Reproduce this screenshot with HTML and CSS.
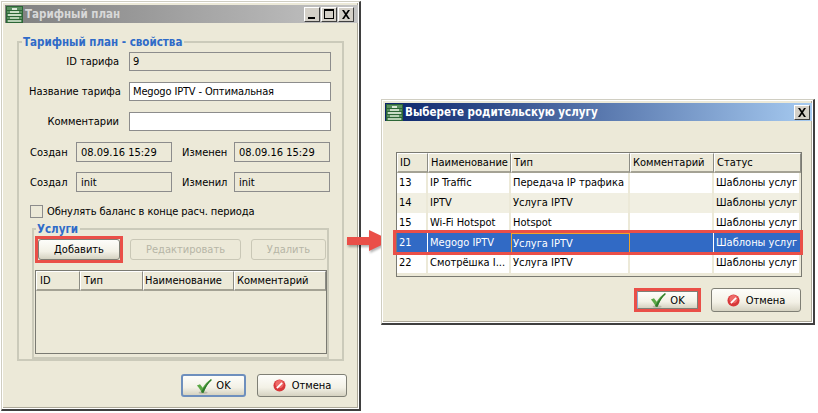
FILE: index.html
```html
<!DOCTYPE html>
<html lang="ru">
<head>
<meta charset="utf-8">
<title>Тарифный план</title>
<link rel="stylesheet" href="styles.css">
</head>
<body>
<svg class="sprites" width="0" height="0" aria-hidden="true">
  <symbol id="logo" viewBox="0 0 17 17">
    <rect width="17" height="17" fill="#2c6636"/>
    <rect x="1" y="1" width="15" height="15" fill="#5a9060"/>
    <rect x="1" y="4" width="15" height="1" fill="#2c6636"/>
    <rect x="1" y="7" width="15" height="1" fill="#2c6636"/>
    <rect x="1" y="10" width="15" height="1" fill="#2c6636"/>
    <rect x="1" y="13" width="15" height="1" fill="#2c6636"/>
    <rect x="6" y="2" width="5" height="2" fill="#dbe8d8"/>
    <rect x="4" y="5" width="9" height="2" fill="#c9dcc6"/>
    <rect x="2" y="8" width="13" height="2" fill="#c9dcc6"/>
    <rect x="4" y="11" width="9" height="2" fill="#b5cfb3"/>
    <rect x="2" y="14" width="13" height="2" fill="#b5cfb3"/>
  </symbol>
  <symbol id="check" viewBox="0 0 18 18">
    <ellipse cx="8" cy="16.5" rx="5" ry="1.2" fill="#b9b7a8"/>
    <path d="M1 8.5 L4.5 7 L7.5 11 C9.5 7.5 13 3.5 17 1 L17.5 2.5 C13.5 6 10.5 11 8.5 16.5 L6.5 16.5 C5 13.5 3 10.5 1 8.5 Z" fill="#5aa845"/>
    <path d="M8.5 16.5 L6.5 16.5 L6 15 C9 10 13 5 17 1 L17.5 2.5 C13.5 6 10.5 11 8.5 16.5 Z" fill="#2f7a2c"/>
  </symbol>
  <symbol id="cancel" viewBox="0 0 14 14">
    <circle cx="7" cy="7" r="6.5" fill="#d8383a"/>
    <circle cx="7" cy="5.5" r="4.5" fill="#ee6a68"/>
    <path d="M3.5 9.2 L9.2 3.5 L10.5 4.8 L4.8 10.5 Z" fill="#fff"/>
  </symbol>
  <symbol id="close" viewBox="0 0 10 9">
    <path d="M1 0 H3 L5 3 L7 0 H9 L6 4.5 L9 9 H7 L5 6 L3 9 H1 L4 4.5 Z" fill="#000"/>
  </symbol>
</svg>

<section class="window main-window">
  <header class="titlebar titlebar-inactive">
    <svg class="logo"><use href="#logo"/></svg>
    <span class="title-text">Тарифный план</span>
    <span class="wbtn"><i class="glyph-min"></i></span>
    <span class="wbtn wbtn-gap"><i class="glyph-max"></i></span>
    <span class="wbtn wbtn-gap"><svg class="glyph-close"><use href="#close"/></svg></span>
  </header>

  <fieldset class="group group-plan">
    <legend>Тарифный план - свойства</legend>

    <div class="row-wide row-id">
      <label class="lbl">ID тарифа</label>
      <div class="field">9</div>
    </div>
    <div class="row-wide">
      <label class="lbl">Название тарифа</label>
      <div class="field field-white">Megogo IPTV - Оптимальная</div>
    </div>
    <div class="row-wide">
      <label class="lbl">Комментарии</label>
      <div class="field field-white"></div>
    </div>

    <div class="row-pair row-created">
      <label class="lbl-first">Создан</label>
      <div class="field">08.09.16 15:29</div>
      <label class="lbl-second">Изменен</label>
      <div class="field">08.09.16 15:29</div>
    </div>
    <div class="row-pair">
      <label class="lbl-first">Создал</label>
      <div class="field">init</div>
      <label class="lbl-second">Изменил</label>
      <div class="field">init</div>
    </div>

    <div class="check-row">
      <span class="checkbox"></span>
      <label>Обнулять баланс в конце расч. периода</label>
    </div>

    <fieldset class="group group-services">
      <legend>Услуги</legend>
      <div class="service-actions">
        <span class="mark"><button class="btn btn-add">Добавить</button></span>
        <button class="btn btn-disabled btn-edit">Редактировать</button>
        <button class="btn btn-disabled btn-del">Удалить</button>
      </div>
      <div class="table-box table-services">
        <table>
          <thead>
            <tr>
              <th class="s-id">ID</th>
              <th class="s-type">Тип</th>
              <th class="s-name">Наименование</th>
              <th class="s-comm">Комментарий</th>
            </tr>
          </thead>
        </table>
      </div>
    </fieldset>
  </fieldset>

  <footer class="actions actions-main">
    <button class="btn btn-ok btn-default"><svg class="ico-check"><use href="#check"/></svg>OK</button>
    <button class="btn btn-cancel-main"><svg class="ico-cancel"><use href="#cancel"/></svg>Отмена</button>
  </footer>
</section>

<svg class="arrow" width="46" height="24" viewBox="0 0 46 24" aria-hidden="true">
  <path d="M1 8 H23 V1 L45 11.5 L23 22 V16 H1 Z" fill="#ea4f48"/>
</svg>

<section class="window child-window">
  <header class="titlebar titlebar-active">
    <svg class="logo"><use href="#logo"/></svg>
    <span class="title-text">Выберете родительскую услугу</span>
    <span class="wbtn"><svg class="glyph-close"><use href="#close"/></svg></span>
  </header>

  <div class="table-box table-parents">
    <table>
      <thead>
        <tr>
          <th class="p-id">ID</th>
          <th class="p-name">Наименование</th>
          <th class="p-type">Тип</th>
          <th class="p-comm">Комментарий</th>
          <th class="p-status">Статус</th>
        </tr>
      </thead>
      <tbody>
        <tr><td>13</td><td>IP Traffic</td><td>Передача IP трафика</td><td></td><td>Шаблоны услуг</td></tr>
        <tr class="alt"><td>14</td><td>IPTV</td><td>Услуга IPTV</td><td></td><td>Шаблоны услуг</td></tr>
        <tr><td>15</td><td>Wi-Fi Hotspot</td><td>Hotspot</td><td></td><td>Шаблоны услуг</td></tr>
        <tr class="selected"><td>21</td><td>Megogo IPTV</td><td class="focus">Услуга IPTV</td><td></td><td>Шаблоны услуг</td></tr>
        <tr><td>22</td><td>Смотрёшка I...</td><td>Услуга IPTV</td><td></td><td>Шаблоны услуг</td></tr>
      </tbody>
    </table>
    <div class="row-mark"></div>
  </div>

  <footer class="actions actions-child">
    <span class="mark"><button class="btn btn-ok-child"><svg class="ico-check"><use href="#check"/></svg>OK</button></span>
    <button class="btn btn-cancel-child"><svg class="ico-cancel"><use href="#cancel"/></svg>Отмена</button>
  </footer>
</section>
</body>
</html>
```

FILE: styles.css
```css
* { box-sizing: border-box; }
html, body { margin: 0; padding: 0; }
body {
  position: relative;
  width: 818px;
  height: 413px;
  overflow: hidden;
  background: #fff;
  font-family: "DejaVu Sans", sans-serif;
  font-stretch: condensed;
  font-size: 11px;
  line-height: 13px;
  color: #000;
}
.sprites { position: absolute; }

/* windows on the desktop */
.window {
  position: absolute;
  background: #ece9d8;
  border: 1px solid #d0cec2;
  border-width: 1px 2px 2px 1px;
  border-right-color: #3f3f3f;
  border-bottom-color: #3f3f3f;
  box-shadow: inset 0 0 0 1px #fff, inset -1px -1px 0 1px #aca899;
  padding: 3px 1px 0 3px;
}
.main-window { left: 1px; top: 1px; width: 360px; height: 410px; }
.child-window { left: 381px; top: 99px; width: 434px; height: 226px; }

.titlebar {
  display: flex;
  align-items: center;
  height: 18px;
  padding-left: 1px;
  padding-right: 2px;
  font-weight: bold;
  font-size: 11.5px;
}
.titlebar-inactive { background: linear-gradient(90deg, #7f7f7f, #c4c4c4); color: #d8d8d8; padding-right: 4px; }
.titlebar-active { background: linear-gradient(90deg, #0a246a, #a6caf0); color: #fff; }
.logo { width: 17px; height: 17px; flex: none; }
.title-text { margin-left: 2px; flex: 1; }

.wbtn {
  display: flex;
  align-items: center;
  justify-content: center;
  width: 16px;
  height: 15px;
  background: #d4d0c8;
  border: 1px solid;
  border-color: #fff #404040 #404040 #fff;
}
.wbtn-gap { margin-left: 1px; }
.glyph-min { width: 7px; height: 2px; background: #000; margin-top: 8px; margin-right: 2px; }
.glyph-max { width: 10px; height: 10px; border: 1px solid #000; border-top-width: 2px; }
.glyph-close { width: 10px; height: 9px; }

/* group boxes */
.group {
  margin: 0;
  padding: 0;
  border: 2px solid #cbcaba;
  min-width: 0;
}
.group legend {
  color: #2f6bc8;
  font-weight: bold;
  font-size: 11.5px;
  line-height: 14px;
  padding: 0 2px 0 1px;
  white-space: nowrap;
}
.group-plan {
  margin: 12px 0 0 12px;
  width: 327px;
  height: 326px;
  padding: 3px 12px 0 10px;
}
.group-plan > legend { margin-left: -7px; }
.group-services {
  width: 297px;
  height: 137px;
  margin: 4px 0 0 3px;
  padding: 0 1px;
}
.group-services > legend { margin-left: 1px; }

/* form rows */
.row-wide {
  display: grid;
  grid-template-columns: 90px 202px;
  column-gap: 10px;
  align-items: center;
  height: 19px;
  margin-top: 11px;
}
.row-id { margin-top: 0; }
.lbl { text-align: right; white-space: nowrap; }
.field {
  height: 19px;
  padding: 2px 3px;
  border: 1px solid #8c8c8c;
  white-space: nowrap;
  overflow: hidden;
}
.field-white { background: #fff; letter-spacing: -.15px; }
.row-pair {
  display: grid;
  grid-template-columns: 47px 96px 62px 96px;
  align-items: center;
  height: 20px;
  margin-top: 10px;
}
.row-created { margin-top: 11px; }
.lbl-first { padding-left: 1px; }
.lbl-second { padding-left: 10px; }
.row-pair .field { height: 20px; padding-top: 3px; padding-left: 4px; }

.check-row {
  display: flex;
  align-items: center;
  margin-top: 13px;
  height: 13px;
  letter-spacing: -.08px;
}
.checkbox {
  width: 13px;
  height: 13px;
  margin: 0 4px 0 1px;
  border: 1px solid #8c8c8c;
}

/* buttons */
.btn {
  display: inline-flex;
  align-items: center;
  justify-content: center;
  height: 21px;
  padding: 0;
  font: inherit;
  font-stretch: condensed;
  color: #000;
  border: 1px solid #7f7f75;
  border-radius: 3px;
  background: linear-gradient(180deg, #fdfdfa 0%, #f3f1e6 60%, #d5d2c1 100%);
}
.btn-disabled {
  color: #b6b5a6;
  background: #ece9d8;
  border-color: #c9c7b6;
}
.mark {
  display: inline-flex;
  border: 3px solid #ea4f48;
}
.service-actions {
  display: flex;
  align-items: flex-start;
  gap: 10px;
  height: 27px;
}
.btn-add { width: 82px; }
.mark + .btn-edit { margin: 3px 0 0 -3px; width: 111px; }
.btn-del { width: 75px; margin-top: 3px; }
.actions { display: flex; }
.actions-main { margin: 13px 0 0 176px; gap: 11px; }
.actions-child { margin: 11px 0 0 249px; gap: 10px; }
.btn-ok { width: 65px; height: 23px; }
.btn-default { border-color: #6e8fbd; border-width: 2px; }
.btn-cancel-main { width: 90px; height: 23px; }
.btn-ok-child { width: 61px; height: 18px; border-radius: 0; border-left-color: #8fa8d0; }
.btn-cancel-child { width: 90px; height: 24px; }
.ico-check { width: 16px; height: 16px; margin-right: 4px; }
.ico-cancel { width: 13px; height: 13px; margin-right: 6px; }

/* tables */
.table-box {
  position: relative;
  border: 1px solid #7a7a72;
  background: #ece9d8;
}
.table-services { margin-top: 7px; width: 292px; height: 84px; }
.table-parents { margin: 31px 0 0 11px; width: 406px; height: 125px; }
table { border-collapse: separate; border-spacing: 0; table-layout: fixed; width: 100%; }
th {
  height: 20px;
  padding: 0 2px;
  text-align: left;
  font-weight: normal;
  background: #ece9d8;
  border-top: 1px solid #fff;
  border-left: 1px solid #fff;
  border-right: 1px solid #8c8c84;
  border-bottom: 2px solid #a4a294;
  white-space: nowrap;
  overflow: hidden;
}
td {
  height: 20px;
  padding: 0 2px 2px;
  background: #fff;
  border-right: 2px solid #ece9d8;
  white-space: nowrap;
  overflow: hidden;
}
.alt td { background: #f1efe2; }
.selected td { background: #316ac5; color: #fff; border-right-color: #316ac5; }
.selected td:first-child { border-right: 1px solid #fff; }
.selected td:nth-child(4) { border-right: 1px solid #fff; }
.selected td.focus { border: 1px solid #f0a328; padding: 0 1px; }
.row-mark {
  position: absolute;
  left: -4px;
  top: 77px;
  width: 410px;
  height: 25px;
  border: 3px solid #ea4f48;
}
.s-id { width: 44px; padding-left: 3px; }
.s-type { width: 63px; padding-left: 3px; }
.s-name { width: 91px; padding-left: 1px; }
.s-comm { width: 92px; }
.p-id { width: 31px; }
.p-name { width: 83px; }
.p-type { width: 119px; }
.p-comm { width: 84px; }
.p-status { width: 87px; }

.arrow { position: absolute; left: 346px; top: 229px; filter: drop-shadow(1px 2px 1px rgba(0,0,0,.3)); }
```
